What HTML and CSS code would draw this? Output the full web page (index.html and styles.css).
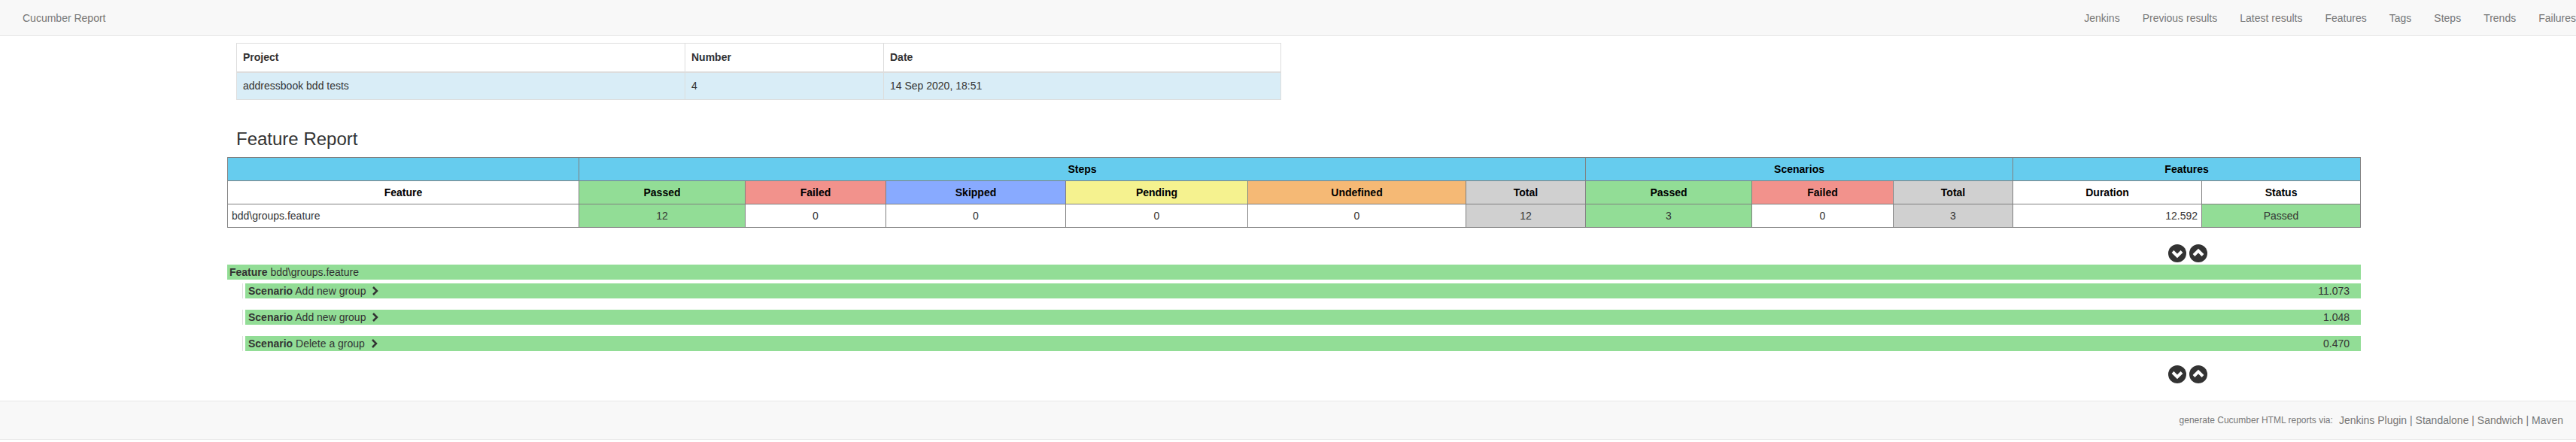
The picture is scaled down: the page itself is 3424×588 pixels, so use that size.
FILE: index.html
```html
<!DOCTYPE html>
<html lang="en">
<head>
  <meta charset="UTF-8" />
  <title>Cucumber Report</title>
  <link rel="stylesheet" href="styles.css">
</head>
<body>

<nav class="navbar">
  <a class="brand" href="#">Cucumber Report</a>
  <ul class="nav-links">
    <li><a href="#">Jenkins</a></li>
    <li><a href="#">Previous results</a></li>
    <li><a href="#">Latest results</a></li>
    <li><a href="#">Features</a></li>
    <li><a href="#">Tags</a></li>
    <li><a href="#">Steps</a></li>
    <li><a href="#">Trends</a></li>
    <li><a href="#">Failures</a></li>
  </ul>
</nav>

<main class="content">
  <table class="info-table">
    <thead>
      <tr>
        <th class="col-project">Project</th>
        <th class="col-number">Number</th>
        <th>Date</th>
      </tr>
    </thead>
    <tbody>
      <tr>
        <td>addressbook bdd tests</td>
        <td>4</td>
        <td>14 Sep 2020, 18:51</td>
      </tr>
    </tbody>
  </table>

  <h3 class="report-title">Feature Report</h3>

  <table class="stats-table">
    <colgroup>
      <col class="w-feature"><col class="w-s-passed"><col class="w-s-failed"><col class="w-s-skipped">
      <col class="w-s-pending"><col class="w-s-undefined"><col class="w-s-total"><col class="w-c-passed">
      <col class="w-c-failed"><col class="w-c-total"><col class="w-duration"><col class="w-status">
    </colgroup>
    <thead>
      <tr class="group-row">
        <th></th>
        <th colspan="6">Steps</th>
        <th colspan="3">Scenarios</th>
        <th colspan="2">Features</th>
      </tr>
      <tr>
        <th>Feature</th>
        <th class="passed">Passed</th>
        <th class="failed">Failed</th>
        <th class="skipped">Skipped</th>
        <th class="pending">Pending</th>
        <th class="undefined">Undefined</th>
        <th class="total">Total</th>
        <th class="passed">Passed</th>
        <th class="failed">Failed</th>
        <th class="total">Total</th>
        <th>Duration</th>
        <th>Status</th>
      </tr>
    </thead>
    <tbody>
      <tr>
        <td class="left">bdd\groups.feature</td>
        <td class="passed">12</td>
        <td>0</td>
        <td>0</td>
        <td>0</td>
        <td>0</td>
        <td class="total">12</td>
        <td class="passed">3</td>
        <td>0</td>
        <td class="total">3</td>
        <td class="right">12.592</td>
        <td class="passed">Passed</td>
      </tr>
    </tbody>
  </table>

  <div class="toggles toggles-top">
    <svg class="toggle" viewBox="0 0 24 24"><circle cx="12" cy="12" r="12"/><path d="M6 9.500 12 15.500l6-6" /></svg>
    <svg class="toggle" viewBox="0 0 24 24"><circle cx="12" cy="12" r="12"/><path d="M6 14.500 12 8.500l6 6" /></svg>
  </div>

  <div class="bar"><span><b>Feature</b> bdd\groups.feature</span></div>

  <div class="scenario">
    <div class="bar"><span><b>Scenario</b> Add new group</span><svg class="chevron" viewBox="0 0 9 12"><path d="M2 1l5 5-5 5" /></svg><span class="time">11.073</span></div>
  </div>
  <div class="scenario">
    <div class="bar"><span><b>Scenario</b> Add new group</span><svg class="chevron" viewBox="0 0 9 12"><path d="M2 1l5 5-5 5" /></svg><span class="time">1.048</span></div>
  </div>
  <div class="scenario">
    <div class="bar"><span><b>Scenario</b> Delete a group</span><svg class="chevron" viewBox="0 0 9 12"><path d="M2 1l5 5-5 5" /></svg><span class="time">0.470</span></div>
  </div>

  <div class="toggles toggles-bottom">
    <svg class="toggle" viewBox="0 0 24 24"><circle cx="12" cy="12" r="12"/><path d="M6 9.500 12 15.500l6-6" /></svg>
    <svg class="toggle" viewBox="0 0 24 24"><circle cx="12" cy="12" r="12"/><path d="M6 14.500 12 8.500l6 6" /></svg>
  </div>
</main>

<footer class="footer">
  <small>generate Cucumber HTML reports via:</small>
  <span class="footer-links">
    <a href="#">Jenkins Plugin</a> | <a href="#">Standalone</a> | <a href="#">Sandwich</a> | <a href="#">Maven</a>
  </span>
</footer>

</body>
</html>
```

FILE: styles.css
```css
* {
  box-sizing: border-box;
}
html,
body {
  overflow: hidden;
}
body {
  margin: 0;
  font-family: "Liberation Sans", Arial, sans-serif;
  font-size: 14px;
  line-height: 20px;
  color: #333;
  background: #fff;
}
a {
  color: inherit;
  text-decoration: none;
}

/* top bar */
.navbar {
  display: flex;
  justify-content: space-between;
  align-items: center;
  height: 48px;
  padding-left: 30px;
  background: #f8f8f8;
  border-bottom: 1px solid #e7e7e7;
  color: #777;
}
.nav-links {
  display: flex;
  gap: 30px;
  margin: 0;
  padding: 0;
  list-style: none;
}

/* report */
.content {
  padding: 9px 286px 0 302px;
}
.info-table {
  width: 1389px;
  margin-left: 12px;
  border-collapse: collapse;
  table-layout: fixed;
}
.info-table th,
.info-table td {
  height: 38px;
  padding: 0 8px;
  text-align: left;
  border: 1px solid #ddd;
}
.info-table th {
  border-bottom-width: 2px;
}
.info-table td {
  height: 37px;
  background: #d9edf7;
}
.col-project {
  width: 596px;
}
.col-number {
  width: 264px;
}
.report-title {
  margin: 39px 0 11px 12px;
  font-size: 24px;
  font-weight: 500;
  line-height: 26px;
}
.stats-table {
  width: 2835px;
  border-collapse: collapse;
  table-layout: fixed;
  color: #000;
}
.stats-table th,
.stats-table td {
  height: 31px;
  padding: 0 5px;
  text-align: center;
  border: 1px solid #808080;
}
.stats-table td {
  color: #333;
}
.stats-table td.left {
  text-align: left;
}
.stats-table td.right {
  text-align: right;
}
.group-row th {
  background: #66ccee;
}
.passed {
  background: #92dd96;
}
.failed {
  background: #f2928c;
}
.skipped {
  background: #88aaff;
}
.pending {
  background: #f5f28f;
}
.undefined {
  background: #f5b975;
}
.total {
  background: #d0d0d0;
}
.w-feature { width: 467px; }
.w-s-passed { width: 221px; }
.w-s-failed { width: 187px; }
.w-s-skipped { width: 239px; }
.w-s-pending { width: 242px; }
.w-s-undefined { width: 290px; }
.w-s-total { width: 159px; }
.w-c-passed { width: 221px; }
.w-c-failed { width: 188px; }
.w-c-total { width: 159px; }
.w-duration { width: 251px; }
.w-status { width: 211px; }

/* expand / collapse buttons */
.toggles {
  display: flex;
  justify-content: flex-end;
  gap: 4px;
  padding-right: 204px;
}
.toggles-top {
  margin: 22px 0 3px;
}
.toggles-bottom {
  margin-top: 19px;
}
.toggle {
  display: block;
  width: 24px;
  height: 24px;
}
.toggle circle {
  fill: #333;
}
.toggle path {
  fill: none;
  stroke: #fff;
  stroke-width: 4;
}

/* feature and scenario bars */
.bar {
  display: flex;
  align-items: center;
  height: 20px;
  padding: 0 15px 0 3px;
  background: #92dd96;
}
.scenario {
  margin: 5px 0 15px 20px;
  padding-left: 3px;
  border-left: 1px solid #ddd;
}
.scenario .bar {
  padding-left: 4px;
}
.chevron {
  width: 9px;
  height: 12px;
  margin-left: 8px;
  fill: none;
  stroke: #333;
  stroke-width: 2.500;
}
.time {
  margin-left: auto;
}

/* footer */
.footer {
  display: flex;
  justify-content: flex-end;
  align-items: center;
  gap: 8px;
  height: 52px;
  margin-top: 23px;
  padding-right: 17px;
  background: #f8f8f8;
  border-top: 1px solid #e7e7e7;
  border-bottom: 1px solid #e7e7e7;
  color: #777;
}
.footer small {
  font-size: 12px;
}
```
